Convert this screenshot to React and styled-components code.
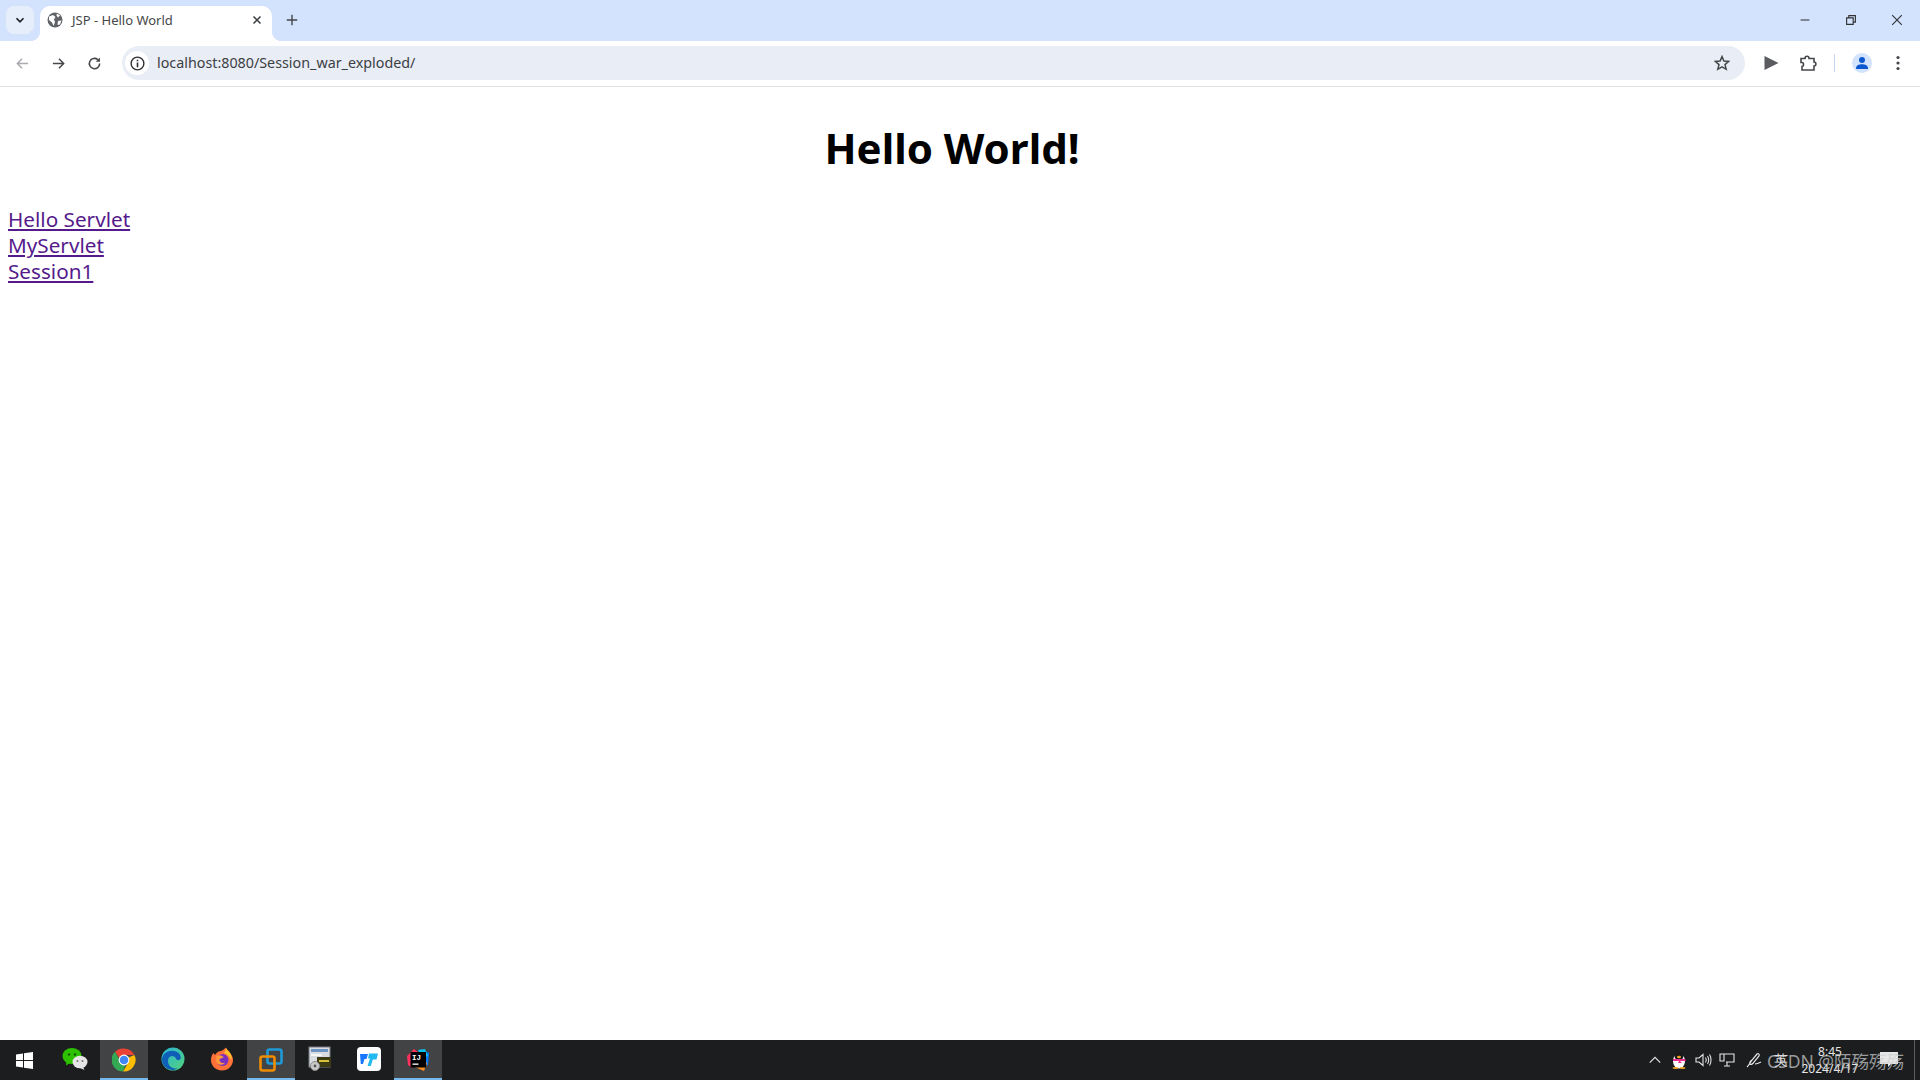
import React from 'react';
import styled, { createGlobalStyle } from 'styled-components';

const GlobalStyle = createGlobalStyle`
  html, body {
    margin: 0;
    padding: 0;
    height: 100%;
    overflow: hidden;
    background: #ffffff;
  }
  #root {
    height: 100%;
  }
`;

const Screen = styled.div`
  position: relative;
  width: 1920px;
  height: 1080px;
  display: flex;
  flex-direction: column;
  font-family: "Noto Sans", "Open Sans", sans-serif;
`;

const TabStrip = styled.div`
  height: 41px;
  flex: none;
  display: flex;
  align-items: flex-end;
  background: #d3e3fd;
  padding-left: 6px;
`;

const TabSearch = styled.div`
  width: 28px;
  height: 28px;
  margin-bottom: 7px;
  border-radius: 8px;
  background: #e6eefc;
  display: flex;
  align-items: center;
  justify-content: center;
`;

const Tab = styled.div`
  position: relative;
  width: 232px;
  height: 35px;
  margin-left: 6px;
  padding: 0 8px 7px 7px;
  box-sizing: border-box;
  display: flex;
  align-items: center;
  background: #ffffff;
  border-radius: 10px 10px 0 0;

  &::before,
  &::after {
    content: '';
    position: absolute;
    bottom: 0;
    width: 10px;
    height: 10px;
  }
  &::before {
    left: -10px;
    background: radial-gradient(circle at 0 0, #d3e3fd 10px, #ffffff 10.5px);
  }
  &::after {
    right: -10px;
    background: radial-gradient(circle at 100% 0, #d3e3fd 10px, #ffffff 10.5px);
  }
`;

const TabTitle = styled.span`
  flex: 1;
  margin-left: 9px;
  font-size: 13px;
  color: #45474a;
  white-space: nowrap;
`;

const NewTab = styled.div`
  width: 28px;
  height: 28px;
  margin-bottom: 7px;
  margin-left: 6px;
  display: flex;
  align-items: center;
  justify-content: center;
`;

const WindowControls = styled.div`
  margin-left: auto;
  height: 41px;
  display: flex;
  align-items: center;
`;

const WindowButton = styled.div`
  width: 46px;
  height: 41px;
  padding-bottom: 1px;
  box-sizing: border-box;
  display: flex;
  align-items: center;
  justify-content: center;
`;

const Toolbar = styled.div`
  height: 44px;
  flex: none;
  display: flex;
  align-items: center;
  background: #ffffff;
  border-bottom: 1px solid #dfe1e5;
  padding: 0 0 1px 4px;
  box-sizing: content-box;
`;

const NavButton = styled.div`
  width: 36px;
  height: 34px;
  flex: none;
  display: flex;
  align-items: center;
  justify-content: center;
`;

const Omnibox = styled.div`
  width: 1623px;
  height: 34px;
  flex: none;
  margin-left: 10px;
  padding: 0 15px 0 3px;
  box-sizing: border-box;
  border-radius: 17px;
  background: #e9edf6;
  display: flex;
  align-items: center;
`;

const InfoChip = styled.div`
  width: 24px;
  height: 24px;
  border-radius: 50%;
  background: #ffffff;
  display: flex;
  align-items: center;
  justify-content: center;
`;

const Url = styled.span`
  flex: 1;
  margin-left: 8px;
  padding-bottom: 1px;
  font-size: 14.3px;
  color: #3c4043;
  white-space: nowrap;
`;

const ToolSeparator = styled.div`
  width: 1px;
  height: 18px;
  margin: 0 8px;
  background: #c7d7f2;
`;

const ProfileBadge = styled.div`
  width: 20px;
  height: 20px;
  margin-left: 9px;
  border-radius: 50%;
  background: #d3e3fd;
  display: flex;
  align-items: center;
  justify-content: center;
`;

const MenuButton = styled(NavButton)`
  margin-left: 8px;
`;

const ActionButton = styled(NavButton)`
  margin-left: ${(p) => p.$gap}px;
`;

const Page = styled.main`
  flex: 1;
  background: #ffffff;
  padding: 0 8px;
`;

const Heading = styled.h1`
  margin: 32px 16px 29px 0;
  text-align: center;
  font-size: 42px;
  line-height: 58px;
  font-weight: 700;
  color: #000000;
`;

const LinkList = styled.div`
  display: flex;
  flex-direction: column;
  align-items: flex-start;
`;

const PageLink = styled.a`
  font-size: 20.7px;
  line-height: 26px;
  color: #551a8b;
  text-decoration: underline;
`;

const Taskbar = styled.div`
  height: 40px;
  flex: none;
  display: flex;
  align-items: stretch;
  background: #1b1d1f;
`;

const StartButton = styled.div`
  width: 51px;
  padding-right: 3px;
  box-sizing: border-box;
  display: flex;
  align-items: center;
  justify-content: center;
`;

const TaskItem = styled.div`
  width: 48px;
  margin-right: 1px;
  box-sizing: border-box;
  display: flex;
  align-items: center;
  justify-content: center;
  background: ${(p) => (p.$active ? '#414345' : 'transparent')};
  border-bottom: 2px solid ${(p) => (p.$active ? '#76b9ed' : 'transparent')};
  padding-top: ${(p) => (p.$active ? '2px' : '0')};
`;

const Tray = styled.div`
  margin-left: auto;
  display: flex;
  align-items: center;
  color: #e6e6e6;
`;

const TraySlot = styled.div`
  width: ${(p) => p.$w || 24}px;
  height: 40px;
  display: flex;
  align-items: center;
  justify-content: center;
  font-size: 14px;
`;

const Clock = styled.div`
  width: 72px;
  padding-left: 2px;
  box-sizing: border-box;
  display: flex;
  flex-direction: column;
  align-items: center;
  font-size: 12px;
  line-height: 17px;
  color: #e6e6e6;
`;

const NotifySlot = styled.div`
  width: 30px;
  height: 40px;
  margin-left: 9px;
  display: flex;
  align-items: center;
  justify-content: center;
`;

const ShowDesktop = styled.div`
  width: 5px;
  height: 40px;
  margin-left: 10px;
  border-left: 1px solid #5a5c5e;
`;

const Watermark = styled.div`
  position: absolute;
  left: 1767px;
  bottom: 7px;
  font-size: 17.5px;
  line-height: 24px;
  color: rgba(205, 205, 205, 0.72);
  white-space: nowrap;
  font-family: "Noto Sans", "Noto Sans CJK SC", sans-serif;
`;

const Globe = () => (
  <svg width="16" height="16" viewBox="0 0 16 16">
    <circle cx="8" cy="8" r="7.5" fill="#5f6368" />
    <path d="M2 4.5 L6 3 L8.5 5 L7 7.5 L8 10 L6.5 14 L5 10.5 L2 8 Z M10 1.5 L13 3.5 L11 5.5 L9.5 3.5 Z M11 9 L14.5 8.5 L13 12.5 L10.5 13 Z" fill="#ffffff" />
  </svg>
);

const Line = ({ d, w = 16, color = '#45474a', sw = 1.6, box = 16 }) => (
  <svg width={w} height={w} viewBox={`0 0 ${box} ${box}`} fill="none" stroke={color} strokeWidth={sw}>
    <path d={d} />
  </svg>
);

const Chrome = () => (
  <svg width="24" height="24" viewBox="0 0 24 24">
    <path d="M12 0.5 A11.5 11.5 0 0 1 22.4 7 H12 A5 5 0 0 0 7.3 10.3 L3 3.8 A11.5 11.5 0 0 1 12 0.5 Z" fill="#ea4335" />
    <path d="M22.4 7 A11.5 11.5 0 0 1 11 23.5 L16.3 14.5 A5 5 0 0 0 16.5 9.5 Z" fill="#fbbc04" />
    <path d="M3 3.8 L8 12.8 A5 5 0 0 0 13.5 16.8 L11 23.5 A11.5 11.5 0 0 1 3 3.8 Z" fill="#34a853" />
    <circle cx="12" cy="12" r="5.4" fill="#ffffff" />
    <circle cx="12" cy="12" r="4.3" fill="#4285f4" />
  </svg>
);

const Edge = () => (
  <svg width="24" height="24" viewBox="0 0 24 24">
    <defs>
      <linearGradient id="edgeA" x1="0" y1="0" x2="1" y2="1">
        <stop offset="0" stopColor="#2bb6d8" />
        <stop offset="1" stopColor="#52d27a" />
      </linearGradient>
    </defs>
    <circle cx="12" cy="12" r="11.5" fill="url(#edgeA)" />
    <path d="M1 12 C2 5 10 2 16 5 C20 7 21 12 18 13 C14 14 16 9 11 9 C7 9 6 14 8 18 C10 21 14 22 17 21.5 C12 25 1 22 1 12 Z" fill="#0f5fb8" />
  </svg>
);

const Firefox = () => (
  <svg width="24" height="24" viewBox="0 0 24 24">
    <path d="M12 23.5 C5 23.5 1 18 1 13 C1 10 2 7.5 3.5 6 L5 8 C6.5 5.5 9 4 11 4 C13 3 15 2 15.5 0.5 C16.5 2 17 3 19 5 C22 8 23 10.5 23 13 C23 18.5 18.5 23.5 12 23.5 Z" fill="#ff7139" />
    <path d="M16 1 C17 3 19 4 20.5 6.5 C22 9 22 12 21 13 C19 9 17 7 14 6 C15 4.5 16 3 16 1 Z" fill="#ffbd2e" />
    <circle cx="12.5" cy="13" r="6" fill="#7b2fbe" />
    <path d="M6.5 9 C9 7.5 13 8.5 13.5 10.5 L9.5 12 C9 15 12 17 15 15.5 C14 18.5 7 19 6 14 Z" fill="#ff9a3c" />
  </svg>
);

const VMware = () => (
  <svg width="24" height="24" viewBox="0 0 24 24" fill="none">
    <rect x="8.5" y="1.5" width="14" height="14" rx="2" stroke="#1e9bd7" strokeWidth="2.6" />
    <rect x="1.5" y="8.5" width="14" height="14" rx="2" stroke="#f08c00" strokeWidth="2.6" />
  </svg>
);

const Security = () => (
  <svg width="24" height="26" viewBox="0 0 24 26">
    <rect x="1" y="1" width="21" height="20" fill="#d9dde2" stroke="#777b80" />
    <rect x="3" y="3" width="17" height="3" fill="#6e94c4" />
    <rect x="9" y="11" width="14" height="10" fill="#3d3b14" />
    <rect x="11" y="14" width="10" height="2" fill="#d8c23a" />
    <rect x="3" y="8" width="11" height="2" fill="#f5f5f5" />
    <circle cx="7" cy="20" r="4.5" fill="#c9c9c9" stroke="#8a8a8a" />
    <circle cx="7" cy="20" r="1.4" fill="#555555" />
  </svg>
);

const ToDesk = () => (
  <svg width="24" height="24" viewBox="0 0 24 24">
    <rect width="24" height="24" rx="4" fill="#ffffff" />
    <path d="M3 7 H11 L9.5 12 H7.5 L6 17 H3.8 Z" fill="#1677ff" />
    <path d="M12 6.5 H21 L19.5 12.5 H15.8 L13.8 19 H10.5 L13 11.5 H11 Z" fill="#22b8f0" />
  </svg>
);

const Idea = () => (
  <svg width="24" height="24" viewBox="0 0 24 24">
    <path d="M1 8 L8 1 L12 4 L6 20 L2 17 Z" fill="#fe315d" />
    <path d="M14 1 L23 5 L22 18 L17 12 Z" fill="#087cfa" />
    <path d="M4 17 L18 23 L21 15 L10 9 Z" fill="#fd8c1f" />
    <path d="M12 2 L19 1 L22 8 L15 10 Z" fill="#07c3f2" />
    <rect x="4.5" y="4" width="15.5" height="15.5" fill="#000000" />
    <rect x="6.5" y="15.5" width="6" height="1.3" fill="#ffffff" />
    <text x="6" y="12" fontSize="7.5" fontWeight="700" fill="#ffffff" fontFamily="Liberation Mono, monospace">IJ</text>
  </svg>
);

const WeChat = () => (
  <svg width="26" height="24" viewBox="0 0 26 24">
    <ellipse cx="10" cy="9" rx="9.5" ry="8" fill="#2dc100" />
    <path d="M4.5 14 L4 18.5 L9 15.5 Z" fill="#2dc100" />
    <circle cx="7" cy="7.5" r="1.2" fill="#125c00" />
    <circle cx="13" cy="7.5" r="1.2" fill="#125c00" />
    <ellipse cx="18" cy="15" rx="7.5" ry="6.3" fill="#e6e6e6" />
    <path d="M21 20 L22.5 23 L18 21 Z" fill="#e6e6e6" />
    <circle cx="15.5" cy="14" r="1" fill="#777777" />
    <circle cx="20.5" cy="14" r="1" fill="#777777" />
  </svg>
);

const Windows = () => (
  <svg width="17" height="17" viewBox="0 0 17 17" fill="#ffffff">
    <path d="M0 2.4 L7 1.4 V8 H0 Z M8 1.2 L17 0 V8 H8 Z M0 9 H7 V15.6 L0 14.6 Z M8 9 H17 V17 L8 15.8 Z" />
  </svg>
);

const Penguin = () => (
  <svg width="16" height="18" viewBox="0 0 16 18">
    <ellipse cx="8" cy="10" rx="6" ry="7.5" fill="#ffffff" />
    <ellipse cx="8" cy="5" rx="4.5" ry="4.5" fill="#1a1a1a" />
    <path d="M2 8 H14 L15 10 H9 L11 12 H7 L8 10 H2 Z" fill="#ec2a8f" />
    <ellipse cx="8" cy="6" rx="2" ry="1.2" fill="#f5a623" />
    <ellipse cx="4.5" cy="17" rx="3" ry="1" fill="#f5a623" />
    <ellipse cx="11.5" cy="17" rx="3" ry="1" fill="#f5a623" />
  </svg>
);

const App = () => (
  <>
    <GlobalStyle />
    <Screen>
      <TabStrip>
        <TabSearch>
          <Line d="M4 6 L8 10 L12 6" w={14} color="#202124" sw={2} />
        </TabSearch>
        <Tab>
          <Globe />
          <TabTitle>JSP - Hello World</TabTitle>
          <Line d="M4 4 L12 12 M12 4 L4 12" w={14} color="#3c4043" sw={1.8} />
        </Tab>
        <NewTab>
          <Line d="M8 2 V14 M2 8 H14" w={14} color="#45474a" />
        </NewTab>
        <WindowControls>
          <WindowButton>
            <Line d="M3 8 H13" w={14} color="#303134" sw={1.2} />
          </WindowButton>
          <WindowButton>
            <Line d="M3 5.5 H10.5 V13 H3 Z M5.5 5.5 V3 H13 V10.5 H10.5" w={14} color="#303134" sw={1.3} />
          </WindowButton>
          <WindowButton>
            <Line d="M2.5 2.5 L13.5 13.5 M13.5 2.5 L2.5 13.5" w={14} color="#303134" sw={1.3} />
          </WindowButton>
        </WindowControls>
      </TabStrip>
      <Toolbar>
        <NavButton>
          <Line d="M14 8 H2.5 M7.5 3 L2.5 8 L7.5 13" w={15} color="#a9abae" />
        </NavButton>
        <NavButton>
          <Line d="M2 8 H13.5 M8.5 3 L13.5 8 L8.5 13" w={15} color="#45474a" />
        </NavButton>
        <NavButton>
          <svg width="15" height="15" viewBox="0 0 16 16" fill="none" stroke="#45474a" strokeWidth="1.7">
            <path d="M13.5 8 A5.5 5.5 0 1 1 11.5 3.8" />
            <path d="M13.8 1.5 V6 H9.3" fill="#45474a" stroke="none" />
          </svg>
        </NavButton>
        <Omnibox>
          <InfoChip>
            <svg width="15" height="15" viewBox="0 0 16 16" fill="none" stroke="#303134" strokeWidth="1.5">
              <circle cx="8" cy="8" r="6.8" />
              <path d="M8 7 V12 M8 4 V5.6" strokeWidth="1.7" />
            </svg>
          </InfoChip>
          <Url>localhost:8080/Session_war_exploded/</Url>
          <svg width="16" height="16" viewBox="0 0 16 16" fill="none" stroke="#45474a" strokeWidth="1.5">
            <path d="M8 1.6 L9.9 6 L14.7 6.4 L11 9.6 L12.2 14.3 L8 11.8 L3.8 14.3 L5 9.6 L1.3 6.4 L6.1 6 Z" />
          </svg>
        </Omnibox>
        <ActionButton $gap={8}>
          <svg width="16" height="16" viewBox="0 0 16 16" fill="#5a5c5f">
            <path d="M1.5 1 L15.5 8 L1.5 15 Z" />
          </svg>
        </ActionButton>
        <ActionButton $gap={1}>
          <svg width="18" height="18" viewBox="0 0 18 18" fill="none" stroke="#45474a" strokeWidth="1.6">
            <path d="M2 4.5 H6 C6 1.5 10 1.5 10 4.5 H15 V8 C17.5 8 17.5 12 15 12 V16 H3 V12.5 C5 12.5 5 8.5 3 8.5 L2 8.5 Z" />
          </svg>
        </ActionButton>
        <ToolSeparator />
        <ProfileBadge>
          <svg width="14" height="14" viewBox="0 0 14 14" fill="#0b57d0">
            <circle cx="7" cy="4" r="3" />
            <path d="M1 13 C1 9 4 8.3 7 8.3 C10 8.3 13 9 13 13 Z" />
          </svg>
        </ProfileBadge>
        <MenuButton>
          <svg width="4" height="16" viewBox="0 0 4 16" fill="#45474a">
            <circle cx="2" cy="2.5" r="1.6" />
            <circle cx="2" cy="8" r="1.6" />
            <circle cx="2" cy="13.5" r="1.6" />
          </svg>
        </MenuButton>
      </Toolbar>
      <Page>
        <Heading>Hello World!</Heading>
        <LinkList>
          <PageLink href="#hello">Hello Servlet</PageLink>
          <PageLink href="#my">MyServlet</PageLink>
          <PageLink href="#session">Session1</PageLink>
        </LinkList>
      </Page>
      <Taskbar>
        <StartButton><Windows /></StartButton>
        <TaskItem><WeChat /></TaskItem>
        <TaskItem $active><Chrome /></TaskItem>
        <TaskItem><Edge /></TaskItem>
        <TaskItem><Firefox /></TaskItem>
        <TaskItem $active><VMware /></TaskItem>
        <TaskItem><Security /></TaskItem>
        <TaskItem><ToDesk /></TaskItem>
        <TaskItem $active><Idea /></TaskItem>
        <Tray>
          <TraySlot><Line d="M2 11 L8 5 L14 11" w={14} color="#e6e6e6" sw={1.3} /></TraySlot>
          <TraySlot><Penguin /></TraySlot>
          <TraySlot>
            <svg width="17" height="16" viewBox="0 0 17 16" fill="none" stroke="#e6e6e6" strokeWidth="1.1">
              <path d="M1 6 H4 L8 2.5 V13.5 L4 10 H1 Z M10.5 5.5 C11.5 7 11.5 9 10.5 10.5 M12.5 4 C14 6 14 10 12.5 12 M14.5 2.5 C16.5 5.5 16.5 10.5 14.5 13.5" />
            </svg>
          </TraySlot>
          <TraySlot>
            <svg width="16" height="16" viewBox="0 0 16 16" fill="none" stroke="#e6e6e6" strokeWidth="1.1">
              <path d="M5.5 2 H15 V10 H7 M1 2 H5 V9 H1 Z M8 10 V14 M5 14 H11" />
            </svg>
          </TraySlot>
          <TraySlot $w={30}>
            <svg width="16" height="16" viewBox="0 0 16 16" fill="none" stroke="#e6e6e6" strokeWidth="1.2">
              <path d="M1 15 C3 13 4 11 6 8 L11 2 C12 1 14 2 13 4 L8 10 C7 12 5 13 4 12 C3 11 5 8 6 8 M9 12 C11 12 13 11 15 10" />
            </svg>
          </TraySlot>
          <TraySlot>英</TraySlot>
          <Clock>
            <span>8:45</span>
            <span>2024/4/17</span>
          </Clock>
          <NotifySlot>
            <svg width="20" height="18" viewBox="0 0 20 18" fill="#e6e6e6">
              <path d="M1 1 H19 V13 H12 L9 16 V13 H1 Z" />
            </svg>
          </NotifySlot>
          <ShowDesktop />
        </Tray>
      </Taskbar>
      <Watermark>CSDN @陌殇殇殇</Watermark>
    </Screen>
  </>
);

export default App;
